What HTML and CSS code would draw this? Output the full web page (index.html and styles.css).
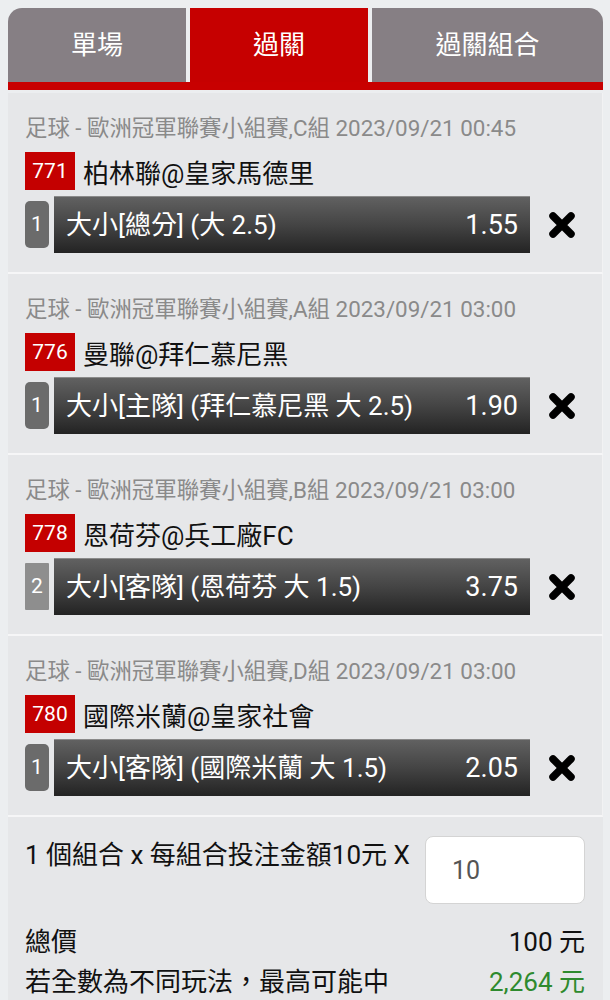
FILE: index.html
```html
<!DOCTYPE html>
<html>
	<head>
		<meta charset="UTF-8">
		<title>過關</title>
		<link rel="stylesheet" href="styles.css">
	</head>
	<body>
		<div id="slip">
			<div class="tabs">
				<div class="tab">單場</div>
				<div class="tab on">過關</div>
				<div class="tab">過關組合</div>
			</div>
			<div class="tabline"></div>

			<ul class="list">
				<li class="item">
					<div class="league">足球 - 歐洲冠軍聯賽小組賽,C組 2023/09/21 00:45</div>
					<div class="match"><span class="no">771</span>柏林聯@皇家馬德里</div>
					<div class="bet">
						<span class="num">1</span>
						<div class="bar"><span>大小[總分] (大 2.5)</span><span>1.55</span></div>
						<a class="del" href="#"><svg width="28" height="28" viewBox="0 0 28 28"><path d="M5 5L23 23M23 5L5 23" stroke="#000" stroke-width="7.5" stroke-linecap="round"/></svg></a>
					</div>
				</li>
				<li class="item">
					<div class="league">足球 - 歐洲冠軍聯賽小組賽,A組 2023/09/21 03:00</div>
					<div class="match"><span class="no">776</span>曼聯@拜仁慕尼黑</div>
					<div class="bet">
						<span class="num">1</span>
						<div class="bar"><span>大小[主隊] (拜仁慕尼黑 大 2.5)</span><span>1.90</span></div>
						<a class="del" href="#"><svg width="28" height="28" viewBox="0 0 28 28"><path d="M5 5L23 23M23 5L5 23" stroke="#000" stroke-width="7.5" stroke-linecap="round"/></svg></a>
					</div>
				</li>
				<li class="item">
					<div class="league">足球 - 歐洲冠軍聯賽小組賽,B組 2023/09/21 03:00</div>
					<div class="match"><span class="no">778</span>恩荷芬@兵工廠FC</div>
					<div class="bet">
						<span class="num sq">2</span>
						<div class="bar"><span>大小[客隊] (恩荷芬 大 1.5)</span><span>3.75</span></div>
						<a class="del" href="#"><svg width="28" height="28" viewBox="0 0 28 28"><path d="M5 5L23 23M23 5L5 23" stroke="#000" stroke-width="7.5" stroke-linecap="round"/></svg></a>
					</div>
				</li>
				<li class="item">
					<div class="league">足球 - 歐洲冠軍聯賽小組賽,D組 2023/09/21 03:00</div>
					<div class="match"><span class="no">780</span>國際米蘭@皇家社會</div>
					<div class="bet">
						<span class="num">1</span>
						<div class="bar"><span>大小[客隊] (國際米蘭 大 1.5)</span><span>2.05</span></div>
						<a class="del" href="#"><svg width="28" height="28" viewBox="0 0 28 28"><path d="M5 5L23 23M23 5L5 23" stroke="#000" stroke-width="7.5" stroke-linecap="round"/></svg></a>
					</div>
				</li>
			</ul>

			<div class="sum">
				<div class="stake">
					<span>1 個組合 x 每組合投注金額10元 X</span>
					<input class="amount" type="text" value="10">
				</div>
				<div class="row"><span>總價</span><span>100 元</span></div>
				<div class="row"><span>若全數為不同玩法，最高可能中</span><span class="win">2,264 元</span></div>
			</div>
		</div>
	</body>
</html>
```

FILE: styles.css
```css
body{
	margin: 0;
	background: #eceef0;
	font-family: Roboto, "Noto Sans CJK TC", sans-serif;
}
#slip{
	padding: 8px 7px 0 8px;
}
.tabs{
	display: grid;
	grid-template-columns: 178px 178px 1fr;
	gap: 4px;
}
.tab{
	height: 74px;
	line-height: 74px;
	text-align: center;
	background: #867f84;
	color: #fff;
	font-size: 26px;
}
.tab:first-child{
	border-top-left-radius: 14px;
}
.tab:last-child{
	border-top-right-radius: 14px;
}
.tab.on{
	background: #c60000;
}
.tabline{
	height: 8px;
	background: #c80000;
}
.list{
	list-style: none;
	margin: 3px 0 0;
	padding: 0;
}
.item{
	background: #e6e7e9;
	padding: 21px 0 19px 17px;
	border-bottom: 2px solid #f6f6f7;
	border-right: 1px solid #f2f2f3;
}
.league{
	font-size: 22.4px;
	line-height: 28px;
	color: #8a8a8a;
	white-space: nowrap;
}
.match{
	display: flex;
	align-items: center;
	margin-top: 10px;
	height: 38px;
	font-size: 26px;
	color: #111;
}
.no{
	width: 50px;
	height: 38px;
	line-height: 38px;
	margin-right: 8px;
	text-align: center;
	background: #c40000;
	color: #fff;
	font-size: 21px;
}
.bet{
	display: flex;
	align-items: center;
	margin-top: 6px;
	height: 57px;
}
.num{
	width: 24px;
	height: 47px;
	line-height: 47px;
	margin-right: 5px;
	text-align: center;
	background: #6b6b6b;
	border-radius: 5px;
	color: #fff;
	font-size: 21px;
}
.num.sq{
	background: #8e8e8e;
	border-radius: 1px;
}
.bar{
	display: flex;
	justify-content: space-between;
	align-items: baseline;
	box-sizing: border-box;
	width: 476px;
	height: 57px;
	padding: 8px 12px 0;
	background: linear-gradient(#616161, #444 50%, #232323);
	border-top: 1px solid #8a8a8a;
	color: #fff;
	font-size: 26px;
	line-height: 40px;
}
.bar span:last-child{
	font-size: 27px;
}
.del{
	flex: 1;
	display: flex;
	justify-content: center;
	align-items: center;
	height: 57px;
	padding-right: 8px;
}
.sum{
	background: #e6e7e9;
	padding: 19px 18px 0 17px;
	height: 164px;
	color: #111;
	font-size: 26px;
}
.stake{
	display: flex;
	align-items: flex-start;
	gap: 8px;
}
.stake span{
	line-height: 36px;
	padding-top: 1px;
	white-space: nowrap;
}
.amount{
	box-sizing: border-box;
	width: 160px;
	height: 68px;
	margin-left: auto;
	padding: 0 0 0 26px;
	border: 1px solid #d4d4d4;
	border-radius: 8px;
	background: #fff;
	color: #555;
	font: 25px Roboto, sans-serif;
}
.row{
	display: flex;
	justify-content: space-between;
	line-height: 40px;
}
.stake + .row{
	margin-top: 18px;
}
.win{
	color: #2e8a2e;
}
```
